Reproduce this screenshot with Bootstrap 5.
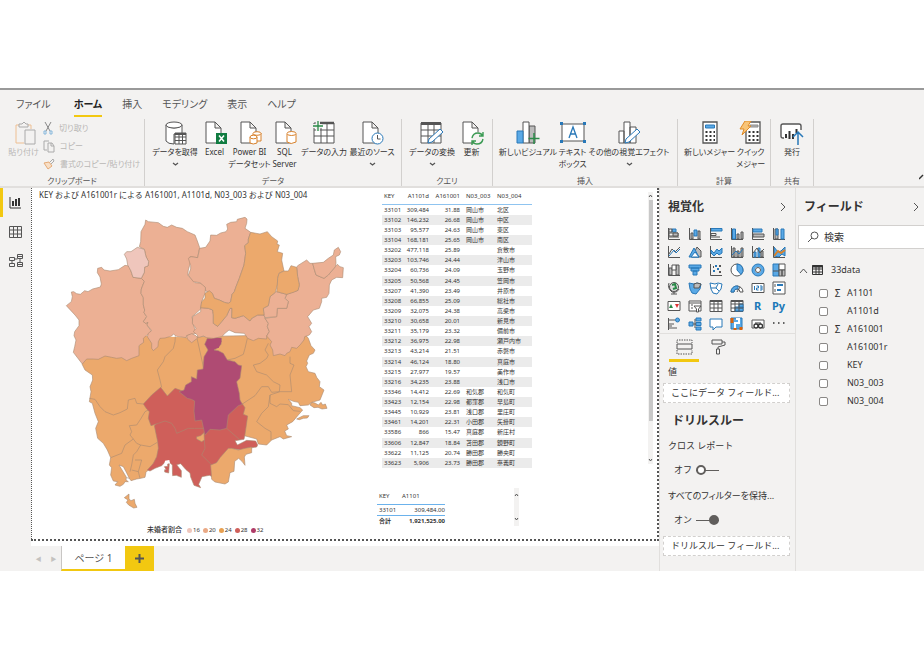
<!DOCTYPE html>
<html lang="ja">
<head>
<meta charset="utf-8">
<meta name="viewport" content="width=device-width, initial-scale=1">
<title>未婚者割合レポート</title>
<link rel="stylesheet" href="https://cdn.jsdelivr.net/npm/bootstrap@5.3.0/dist/css/bootstrap.min.css">
<style>
body{font-family:"Noto Sans","Noto Sans CJK JP",sans-serif;color:#333;font-size:9px;line-height:12px;background:#fff}
button,input{font:inherit;color:inherit}
svg{display:block;flex:none;fill:none;stroke:#555;stroke-width:1}
.app{margin-top:88px;border-top:2px solid #999}
.chrome{background:#f3f2f1}
.tabs{padding:5px 16px 0;font-size:10px;line-height:18px;font-feature-settings:"palt";height:29px}
.tabs a{color:#555;text-decoration:none;height:22px;border-bottom:2px solid transparent;white-space:nowrap}
.tabs a.on{color:#222;font-weight:700;border-color:#f2c811}
.tabs .t1{margin-right:23px}.tabs .t2{margin-right:20px}
.ribbon{font-size:8px;line-height:12px;font-feature-settings:"palt";border-bottom:2px solid #e1dfdd;height:69px}
.grp{border-right:1px solid #d2d0ce;height:67px;display:flex;flex-direction:column;justify-content:space-between;flex:none}
.tools{padding-left:6px}
.grp-cap{font-size:8px;line-height:11px;text-align:center;color:#555}
.tool{border:0;background:none;padding:2px 0 0;display:flex;flex-direction:column;align-items:center;white-space:nowrap;flex:none}
.tool.off,.mini{color:#b9b7b5}
.mini{border:0;background:none;padding:0;height:18px;display:flex;align-items:center;gap:5px;white-space:nowrap}
.g1{width:145px}.g2{width:257px}.g3{width:91px}.g4{width:185px}.g5{width:93px}.g6{width:43px}
.w30{width:31px}.w40{width:39px}.w50{width:48px}.w60{width:58px}.w80{width:82px}
.rail{width:31px;flex:none}
.rail button{border:0;background:none;height:29px;width:31px;padding:0 0 0 6px;border-left:3px solid transparent}
.rail button.on{border-color:#f2c811}
.canvas{border:dotted #555;border-width:0 2px 2px 1px;min-height:353px}
.sheet{padding-bottom:5px}
.viz-title{font-size:8px;line-height:12px;padding:1px 0 0 7px;white-space:nowrap}
.mapcol{width:342px;flex:none}
.mapcol .map{width:100%;height:auto;stroke:#a98a70;stroke-width:1.8;stroke-linejoin:round}
.legend-row{font-size:6px;line-height:10px;padding-left:115px;gap:3px;font-feature-settings:"palt";margin-top:4px}
.legend-row b{font-size:7px;font-weight:500;margin-right:2px}
.legend-row i{width:5px;height:5px;border-radius:50%;margin-right:1px}
.c16{background:#efc6bc}.c20{background:#eaa985}.c24{background:#e8a050}.c28{background:#cf5f5a}.c32{background:#af3b68}
.grid-data{font-size:6px;line-height:8px;white-space:nowrap;width:150px;table-layout:fixed}
.grid-data th{font-weight:400;padding:0 0 0 2px}
.grid-data td{padding:0 0 0 2px}
.grid-data .n{text-align:right}
.big{height:280px;margin-left:8px}
.big thead th{border-bottom:1px solid #8fc4f0;height:16px}
.big .n{padding-right:2px}
.big .s{padding-left:4px}
.big tbody tr:nth-child(even){background:#ebebeb}
.tot{width:68px;margin-left:3px}
.tot th,.tot td{border-bottom:1px solid #6bb2ec;height:11px}
.tot thead th{height:16px}
.tot tfoot td{border:0;font-weight:700}
.sb{width:5px;background:#f3f2f1;display:flex;flex-direction:column;justify-content:space-between;align-items:center}
.sb span{background:#c8c8c8;width:4px;flex:none;margin-bottom:35px}
.sb-low{margin-left:69px}
.pages{height:25px}
.pages a{width:64px;background:#fff;border-bottom:2px solid #f2c811;border-left:1px solid #c8c6c4;color:#555;text-decoration:none;font-size:10px}
.pages .plus{width:29px;background:#f2c811;border:0;padding:0}
.pages .nav-b{border:0;background:none;width:15px;padding:0;color:#c4c2c0;font-size:6px}
.pane-v{width:137px;flex:none;border-right:1px solid #e1dfdd;border-left:1px solid #e1dfdd}
.pane-f{width:128px;flex:none}
.head{padding:10px 4px 0 8px}
.ttl{font-size:12px;line-height:18px;font-weight:700;color:#333;margin:0}
.gal{display:grid;grid-template-columns:repeat(6,21px);grid-auto-rows:18px;padding-left:3px;margin-top:9px}
.gal button{border:0;background:none;padding:0;display:flex;align-items:center;justify-content:center;color:#1b78b8;font-size:11px;font-weight:700}
.k{stroke:#2878b8}.f{fill:#5aa9e6;stroke:#2878b8}.g{fill:#bbb}
.fmt{border-top:1px solid #e1dfdd;padding:5px 0 0 9px;gap:4px}
.fmt button{border:0;background:none;width:30px;height:23px;padding:0;border-bottom:3px solid transparent;display:flex;justify-content:center}
.fmt button.on{border-color:#f2c811}
.lab{padding:4px 0 5px 8px;white-space:nowrap}
.sub{padding:10px 0 0 8px;white-space:nowrap}
.tight{font-feature-settings:"palt";padding-top:14px}
.ttl.drill{padding:9px 0 0 12px}
.switch-row{padding:12px 0 0 14px;gap:4px}
.well{border:1px dashed #d2d0ce;background:#fff;height:20px;line-height:18px;margin:0 5px 0 3px;padding-left:7px;white-space:nowrap}
.well.last{margin-top:10px}
.sw{appearance:none;width:23px;height:10px;margin:0;background:linear-gradient(#605e5c,#605e5c) center/100% 1px no-repeat;position:relative}
.sw::before{content:"";position:absolute;left:0;top:0;width:10px;height:10px;border:2px solid #605e5c;border-radius:50%;background:#fff}
.sw:checked::before{left:13px;background:#605e5c}
.search{height:24px;background:#fff;border:1px solid #d2d0ce;border-right:0;margin:9px 0 12px 2px;padding-left:8px;gap:5px}
.search input{border:0;background:none;width:90px;font-size:10px;padding:0;outline:0}
.search input::placeholder{color:#333;opacity:1}
.tbl-name{padding:3px 0 8px 3px;gap:4px}
.field{height:18px;padding-left:23px}
.field input{appearance:none;width:9px;height:9px;border:1px solid #8a8886;border-radius:2px;background:#fff;margin:0}
.field span{width:19px;text-align:center;font-size:10px}
</style>
<script src="https://cdn.jsdelivr.net/npm/bootstrap@5.3.0/dist/js/bootstrap.bundle.min.js"></script>
</head>
<body>
<div class="app chrome">
<nav class="tabs d-flex">
<a href="#" class="t1">ファイル</a><a href="#" class="t2 on">ホーム</a><a href="#" class="t2">挿入</a><a href="#" class="t2">モデリング</a><a href="#" class="t2">表示</a><a href="#">ヘルプ</a>
</nav>
<div class="ribbon d-flex">
<section class="grp g1"><div class="d-flex">
<button class="tool off ms-2 w30"><svg width="24" height="25" viewBox="0 0 24 25"><path stroke="#eebf92" d="M9 4H4v18h8M14 4h5v4"/><path stroke="#aaa" fill="#f3f2f1" d="M7 6V3h3l2-2 2 2h2v3zM13 9h10v14H13z"/></svg>貼り付け</button>
<div class="ms-1"><button class="mini"><svg width="11" height="13" viewBox="0 0 11 13" stroke="#888"><path stroke="#888" d="M2 0l5 9M8 0L3 9"/><path stroke="#85b7dc" d="M1 9h2v3H1zM7 9h2v3H7z"/></svg>切り取り</button>
<button class="mini"><svg width="12" height="13" viewBox="0 0 12 13"><path stroke="#aaa" d="M4 10H1V1h5M5 3h4l2 3v6H5zM8 3v3h3"/></svg>コピー</button>
<button class="mini"><svg width="12" height="12" viewBox="0 0 12 12"><path stroke="#aaa" d="M7 4l3-3 1 2-3 3"/><path stroke="#e5aa76" fill="#f8dfc6" d="M1 5l5-1 3 4-4 3z"/></svg>書式のコピー/貼り付け</button></div></div>
<div class="grp-cap">クリップボード</div></section>

<section class="grp g2"><div class="d-flex tools">
<button class="tool w50"><svg width="24" height="25" viewBox="0 0 24 25"><path fill="#fff" d="M3 4v16q2 3 8 3V13h8V4q-2 3-8 3T3 4"/><ellipse cx="11" cy="4" rx="8" ry="3" fill="#fff"/><path fill="#fff" d="M12 12h11v11H12zM12 16h11M12 19.500h11M16 13v10M19.500 13v10"/><path stroke-width="2" d="M12 13h11"/></svg>データを取得<svg width="7" height="12" viewBox="0 0 7 12"><path stroke-width="1.300" d="M1 5l2.500 2L6 5"/></svg></button>
<button class="tool w30"><svg width="24" height="25" viewBox="0 0 24 25"><path fill="#fff" d="M3 1h9l6 6v15H3zM12 1v6h6"/><path stroke="none" fill="#107c41" d="M13 12h11v11H13z"/><path stroke="#fff" stroke-width="1.500" d="M16 14.500l5 6M21 14.500l-5 6"/></svg>Excel</button>
<button class="tool w40"><svg width="24" height="25" viewBox="0 0 24 25"><path fill="#fff" d="M3 1h9l6 6v15H3zM12 1v6h6"/><g stroke="#d8812b" fill="#fff"><path d="M15 13v5q3 3 8 2v-8"/><ellipse cx="19" cy="12.500" rx="4" ry="1.800"/><path d="M12 16v6q3 2 7 0v-6"/><ellipse cx="15.500" cy="16" rx="3.500" ry="1.800"/></g></svg>Power BI<span>データセット</span></button>
<button class="tool w30"><svg width="24" height="25" viewBox="0 0 24 25"><path fill="#fff" d="M3 1h9l6 6v15H3zM12 1v6h6"/><path fill="#fff" stroke="#d8812b" d="M14 13v8q4 3 9 0v-8"/><ellipse cx="18.500" cy="12.500" rx="4.500" ry="2" fill="#fff" stroke="#d8812b"/></svg>SQL<span>Server</span></button>
<button class="tool w50"><svg width="24" height="25" viewBox="0 0 24 25"><path fill="#fff" d="M2 2h20v20H2zM2 9h20M2 15h20M9 2v20M15 2v20"/><path stroke-width="2.500" d="M8 2h14"/><path stroke="#f3f2f1" stroke-width="4" d="M6 0v10M0 5h10"/><path stroke="#2a8a48" stroke-width="1.300" d="M6 0v10M1 5h10"/></svg>データの入力</button>
<button class="tool w50"><svg width="24" height="25" viewBox="0 0 24 25"><path fill="#fff" d="M3 1h9l6 6v15H3zM12 1v6h6"/><circle cx="17.500" cy="17.500" r="5.500" fill="#fff" class="k"/><path d="M17.500 14v4h3"/></svg>最近のソース<svg width="7" height="12" viewBox="0 0 7 12"><path stroke-width="1.300" d="M1 5l2.500 2L6 5"/></svg></button>
</div><div class="grp-cap">データ</div></section>

<section class="grp g3"><div class="d-flex tools">
<button class="tool w50"><svg width="24" height="25" viewBox="0 0 24 25"><path fill="#fff" d="M1 2h20v20H1zM1 9h20M1 15h20M8 2v20M14 2v20"/><path stroke-width="3" d="M1 2.500h20"/><path fill="#fff" class="k" d="M8 22l1-4L20 8l3 3-11 10z"/></svg>データの変換<svg width="7" height="12" viewBox="0 0 7 12"><path stroke-width="1.300" d="M1 5l2.500 2L6 5"/></svg></button>
<button class="tool w30"><svg width="24" height="25" viewBox="0 0 24 25"><path fill="#fff" d="M3 1h9l6 6v15H3zM12 1v6h6"/><circle cx="17.500" cy="17.500" r="6.500" fill="#f3f2f1" stroke="none"/><path stroke="#3a9a53" stroke-width="1.400" d="M12 17q1-5 6-5 3 0 5 3M23 11v4h-4M23 18q-1 5-6 5-3 0-5-3M12 24v-4h4"/></svg>更新</button>
</div><div class="grp-cap">クエリ</div></section>

<section class="grp g4"><div class="d-flex tools">
<button class="tool w60"><svg width="24" height="25" viewBox="0 0 24 25"><path fill="#bbb" d="M13 5h6v17h-6z"/><path fill="#fff" d="M7 1h6v21H7z"/><path class="f" d="M1 10h6v12H1z"/><path stroke="#2a8a48" stroke-width="1.500" d="M18 12v11M12.500 17.500h11"/></svg>新しいビジュアル</button>
<button class="tool w30"><svg width="26" height="25" viewBox="0 0 26 25"><path fill="#fff" d="M2 3h22v17H2z"/><path stroke="none" fill="#2878b8" d="M0 1h3v3H0zM23 1h3v3h-3zM0 19h3v3H0zM23 19h3v3h-3z"/><path class="k" stroke-width="1.300" d="M9 17l4-11 4 11M10 13h6"/></svg>テキスト<span>ボックス</span></button>
<button class="tool w80"><svg width="24" height="25" viewBox="0 0 24 25"><path fill="#fff" d="M2 10h5v12H2zM7 1h6v21H7zM13 6h6v16h-6z"/><path fill="#fff" class="k" d="M8 22l1-4L20 8l3 3-11 10z"/></svg>その他の視覚エフェクト<svg width="7" height="12" viewBox="0 0 7 12"><path stroke-width="1.300" d="M1 5l2.500 2L6 5"/></svg></button>
</div><div class="grp-cap">挿入</div></section>

<section class="grp g5"><div class="d-flex tools">
<button class="tool"><svg width="24" height="25" viewBox="0 0 24 25"><path fill="#fff" stroke-width="1.300" d="M5 1h14v21H5z"/><path class="f" d="M7.500 4h9v3h-9z"/><path stroke="#333" stroke-width="2" stroke-dasharray="2 2" d="M7.500 11h9.500M7.500 15h9.500M7.500 19h9.500"/></svg>新しいメジャー</button>
<button class="tool w30"><svg width="24" height="25" viewBox="0 0 24 25"><path fill="#fff" stroke-width="1.300" d="M7 1h14v21H7z"/><path class="g" stroke="#888" d="M11 4h8v2h-8z"/><path stroke="#333" stroke-width="2" stroke-dasharray="2 2" d="M9.500 11h10M9.500 15h10M9.500 19h10"/><path fill="#f8c477" stroke="#e08b27" d="M6 0h6L9 5h3L3 14l2-6H1z"/></svg>クイック<span>メジャー</span></button>
</div><div class="grp-cap">計算</div></section>
<section class="grp g6"><div class="d-flex justify-content-center">
<button class="tool"><svg width="24" height="25" viewBox="0 0 24 25"><path fill="#fff" stroke-width="1.400" d="M4 17H3q-2 0-2-2V5q0-2 2-2h16q2 0 2 2v4"/><path stroke="#333" stroke-width="2" d="M6 17v-4M9.500 18v-8M13 18v-5M16.500 12V8"/><path class="k" stroke-width="1.500" d="M18 24V12M13 16l5-5 5 5"/></svg>発行</button>
</div><div class="grp-cap">共有</div></section>
<button class="mini ms-auto mt-auto" aria-label="リボンを折りたたむ"><svg width="5" height="6" viewBox="0 0 5 6"><path stroke="#333" stroke-width="1.500" d="M0 5l4-4"/></svg></button>
</div>

<div class="d-flex">
<aside class="rail d-flex flex-column">
<button class="on" aria-label="レポート"><svg width="12" height="12" viewBox="0 0 12 12"><path stroke="#333" d="M1 0v11h11"/><path stroke="#333" stroke-width="2" d="M4 9V4M7 9V2M10 9V1"/></svg></button>
<button aria-label="データ"><svg width="13" height="12" viewBox="0 0 13 12"><path d="M.5.5h12v11H.5zM.5 4h12M.5 8h12M4.500 1v10M8.500 1v10"/></svg></button>
<button aria-label="モデル"><svg width="14" height="14" viewBox="0 0 14 14"><path d="M.5 3.500h5v3h-5zM.5 9.500h5v3h-5zM8.500.5h5v4h-5zM8.500 8.500h5v4h-5zM8.500 2.500h5M8.500 10.500h5M3 6.500v3M5.500 5h3M11 4.500v4"/></svg></button>
</aside>
<main class="flex-grow-1">
<div class="bg-white sheet"><div class="canvas d-flex">
<section class="mapcol">
<div class="viz-title">KEY および A161001r による A161001, A1101d, N03_003 および N03_004</div>
<svg class="map" viewBox="6 -2 1026 960" role="img" aria-label="未婚者割合の地図">
<g fill="#eca96c">
<path stroke="none" transform="translate(120 390)" d="M36 97L45 115 67 130 68 145 60 165 63 180 58 210 67 215 75 245 85 270 77 290 83 320 100 335 112 355 122 378 118 400 125 408 122 430 130 448 143 450 135 460 150 464 160 458 165 450 175 450 168 445 170 432 178 440 183 447 200 442 212 440 225 437 228 422 240 410 300 340 420 300 420 20 300 15 220 12 200 60 40 80z"/>
<path transform="translate(480 390)" d="M20 15L345 8 355 20 363 42 375 55 370 65 358 70 350 88 353 95 348 105 355 120 375 125 380 137 390 150 388 165 402 175 390 205 365 212 355 220 330 222 325 212 310 209 295 203 305 215 305 222 330 228 338 235 325 250 308 270 290 280 295 292 284 298 290 312 305 315 280 322 270 315 245 325 230 340 205 337 200 322 155 310 150 230 50 150z"/>
</g>
<g transform="translate(120 390)"><path d="M36 97L45 115 67 130 68 145 60 165 63 180 58 210 67 215 75 245 85 270 77 290 83 320 100 335 112 355 122 378 118 400 125 408 122 430 130 448 143 450 135 460 150 464 160 458 165 450 175 450 168 445 170 432 178 440 183 447 200 442 212 440 225 437 228 422 240 410"/>
<path d="M316 12l-1 18-5 20-25 25-5 15-18 25 8 30 5 22M58 200l17 3 15 22 15 15 25 10 20-7 22-11 3-27 20-5 5 15 20 2M122 378l33-13 10-25 25-18 10 13 12 5 28 5 22-13M190 322l-10-12 5-10-7-18 22-2 12-18 13-22 15-8M212 340l-12 20-10 10-5 30-5 20M195 385h20l-10 35-20-5M205 420l5 20"/>
<path fill="#fff" d="M147 400l13 5 8 15 10 20-8-2-12-20z"/>
<path fill="#eca96c" d="M163 498l14-11v15l6 5 10-4 2 12 6 12-10 2-15-9-7-8 5-7z"/></g>
<g transform="translate(480 390)">
<path d="M172 20l-7 30-5 18-25 12-23 5M235 35l-10 20 10 15-5 10-20 15-20 5 10 20 30 10 20 20 20 10-2 20-23 2-10-17h-20l-20 27-38 25M300 75v20l12 5-12 30 5 50-35 0-30 10v25l20 10 10-8 25 2 15 18 20 2M240 190l-5 35-20 20-15 25 25 20 18 10v25"/>
<path fill="#eca96c" d="M360 220l5-8 10 2 10 6 8-8 5 8 8-3 5 13-15 2-12-5-12 1zM320 262l20-10 17 0-5 7-12 1-12 4z"/>
<path fill="#cf5f5a" d="M-107 282l10 48 2 20-5 25-10 20-18 20 8 3 15-8 20-8 10-10 12-1 10 9v32l12-1 15 6v-20l-14-18 12-3 16 18 12 10 2 12 10 25 20 7-6-10 10-23 22-4 22 10 7 5-12-14-3-30 18-20 10-2 25-28h10l20 4 20-6 25-4 3-6-6-12-27-2-20 10-8 4-7-13 27-4 3-15 8-55-13-5 5-20-8-12-40-14-120 20-40 0z"/>
<path fill="#fff" stroke="none" d="M-75 387l13-2 2 10-18 17h20v-10l5 30h-14v-14h-14z"/>
<path fill="#cf5f5a" d="M-77 405l10-1 0-7 5-1-2 28-12-3v-7h5z"/>
<path fill="#eca96c" d="M62 400l18-7 10-15 25-28h10l20 5 20-5 20-4v17l-17 5-5 8 2 25-9-12-10-9-12 9-2 30-12 4-5 28-10 6-30-6-10-8z"/>
<path fill="#cf5f5a" d="M-140 217l25-27 27-23 20 26 23-23 15 5 50 25 25 55-2 35-30 0-18 0-35 15-5-15-10-15-20-7-20 7-22 7-8-22 3-20-8-8z"/>
<path fill="#af4b73" d="M52 20l13 2 15-4 15 2-2 18-11 12-10 5 13 2 15 8 12 20 23 5 10 10 10 2-5 38-10 10 8 35 2 20 7 13-12 4-30 28-5 40-20 5-30-2-15 17-10-45-20 3-3-30 2-30-10-5-12-3-25-20 15-5 5-15 17-10v-15l16 7 2-27 17-3 3-37 12-20-10-17z"/>
<path fill="#eca96c" d="M20 315l12-3 10-9 1 22-8 5-15-8z"/>
<path d="M43 325l2 25-10 20 15 15 15 15M110 290l40 35"/></g>
<g fill="#ecb094">
<path d="M109 312l15-12 3-15-3-14 7-1 9 6 11 2 13-11 10 3 14-8 23-6 3-9-4-21-8-13 1-13 12-3 7 8 18 3 25-4 20-13 12 2 8 22 4 12 25 3 9 9-9 23-1 13 7 13v22l4 15-2 8 8 12-10 15 7 5 7-3-3 8 12 17v6l-13 8-10 9 1 12-14 10v30l-22 8-15 7-15-9-15 2-15-3-20-4-20 10-15-1h-20l-13 15-7-9-20-26 4-17 4-20-6-13 2-12 13-18v-17l-12-15z"/>
<path d="M347 55l8 5 30 3 15 11 12 3 13-7 15 7 17 3 15 10 23 10 7 18 7 20-4 19-2 11-23-3 2 15-7 25-2 15 22 23 18 2 14 11-2 19-10 25-3 22-14 13-12 10 4 25 10 25-15 3-15 4-2 6-28-4-10-7-5 6-20 6-15 1-5 10-1 15-14 12-5-7v-15l-13-20 3-10 10-8-14-17 3-8-7 3-7-5 10-15-8-12 2-8-4-15v-22l-7-13 1-13 9-23-9-9 9-18 1-16 10-3 2-13-8-15-5-22-15-8 4-15 1-30 12-22z"/>
<path fill="#efc6bc" d="M283 158l7-8h13l19-13 21 6 5 22 8 15-2 13-10 3-1 16-9 18-25-3-6-19-10-18-3-18z"/>
</g>
<g transform="translate(450 0)" fill="#ecb094">
<path d="M59 140L77 137 90 118 92 100 110 101 122 94 138 90 143 82 140 68 152 62 170 60 172 53 195 47 201 52 200 65 195 80 212 92 205 112 205 123 194 132 197 155 192 190 178 230 168 255 163 270 156 278 152 300 145 305 133 302 118 295 103 290 97 275 77 268 76 257 60 243 40 240 25 220 32 202 32 192 25 170 33 165 53 168z"/>
<path d="M62 318L85 320 98 325 100 340 100 365 113 374 125 360 140 342 150 320 156 320 155 348 165 350 190 342 210 358 215 350 233 340 252 340 255 350 265 365 262 375 268 390 260 403 260 412 235 410 220 417 203 410 193 395 165 393 147 385 135 395 125 405 100 410 80 408 70 403 55 408 52 400 40 390 48 380 37 365 38 345 62 330z"/>
<path d="M20 402l15-6 13 6 5 7-18 14-13-11z"/>
<path d="M353 192L380 175 390 185 398 185 402 200 408 220 432 230 445 220 466 195 472 188 480 195 490 198 488 228 470 227 455 235 448 250 447 275 440 287 425 290 425 300 418 320 400 325 383 345 395 365 387 375 395 390 388 400 374 405 372 415 360 430 350 440 335 437 330 450 320 455 315 462 300 457 280 462 278 445 270 430 275 420 260 403 268 390 262 375 265 365 255 350 290 345 292 320 320 320 325 300 315 290 320 278 354 266 358 250 353 225 350 197z"/>
<path d="M398 185L430 182 445 170 460 160 463 145 475 137 482 150 478 160 467 165 468 185 466 195 445 220 432 230 408 220 402 200zM290 270L320 278 315 290 325 300 320 320 292 320 290 345 255 348 252 340 250 320 265 312 270 285 286 272z"/>
<g fill="#eca96c"><path d="M212 92L240 97 262 90 275 105 293 118 291 128 298 130 292 150 308 155 305 175 312 208 297 215 293 230 292 250 286 272 270 285 265 312 250 320 252 340 233 340 215 350 210 358 190 342 165 350 155 348 156 320 150 320 140 342 125 360 113 374 100 365 100 340 98 325 85 320 62 318 65 300 75 290 75 275 88 267 97 275 103 290 118 295 133 302 145 305 152 300 156 278 163 270 168 255 178 230 192 190 197 155 194 132 205 123 205 112z"/>
<path d="M312 208l13 0 8-16 17 5 3 28 5 25-4 16-14 6-20 6-30-8 2-20 1-20 4-15z"/></g>
<path fill="#af4b73" stroke="none" d="M84 412l38-3 2 10-8 20-28-2-6-10z"/>
</g>
</svg>
<div class="legend-row d-flex align-items-center"><b>未婚者割合</b><span class="d-flex align-items-center"><i class="c16"></i>16</span><span class="d-flex align-items-center"><i class="c20"></i>20</span><span class="d-flex align-items-center"><i class="c24"></i>24</span><span class="d-flex align-items-center"><i class="c28"></i>28</span><span class="d-flex align-items-center"><i class="c32"></i>32</span></div>
</section>
<section class="flex-grow-1 d-flex flex-column">
<div class="d-flex justify-content-between">
<table class="grid-data big"><colgroup><col style="width:20px"><col style="width:29px"><col style="width:31px"><col style="width:31px"><col></colgroup>
<thead><tr><th>KEY</th><th class="n">A1101d</th><th class="n">A161001</th><th class="s">N03_003</th><th class="s">N03_004</th></tr></thead><tbody id="rows"></tbody></table>
<div class="sb my-1 me-1"><svg width="5" height="8" viewBox="0 0 5 8"><path d="M1 5l1.500-2L4 5"/></svg><span class="flex-grow-1"></span><svg width="5" height="8" viewBox="0 0 5 8"><path d="M1 3l1.500 2L4 3"/></svg></div>
</div>
<div class="d-flex mt-3 pt-1">
<table class="grid-data tot"><colgroup><col style="width:23px"><col></colgroup><thead><tr><th>KEY</th><th>A1101</th></tr></thead><tbody><tr><td>33101</td><td class="n">309,484.00</td></tr></tbody><tfoot><tr><td>合計</td><td class="n">1,921,525.00</td></tr></tfoot></table>
<div class="sb sb-low"><svg width="5" height="12" viewBox="0 0 5 12"><path d="M1 8l1.500-2L4 8"/></svg><svg width="5" height="12" viewBox="0 0 5 12"><path d="M1 4l1.500 2L4 4"/></svg></div>
</div>
</section>
</div></div>
<div class="pages d-flex"><button class="nav-b" aria-label="前のページ">◀</button><button class="nav-b" aria-label="次のページ">▶</button><a href="#" class="d-flex align-items-center justify-content-center">ページ 1</a><button class="plus d-flex align-items-center justify-content-center" aria-label="ページを追加"><svg width="9" height="9" viewBox="0 0 9 9"><path stroke-width="2" d="M4.500 0v9M0 4.500h9"/></svg></button></div>
</main>

<aside class="pane-v">
<div class="head d-flex justify-content-between align-items-center"><h2 class="ttl">視覚化</h2><button class="mini me-1" aria-label="折りたたむ"><svg width="7" height="10" viewBox="0 0 7 10"><path d="M1 1l4 4-4 4"/></svg></button></div>
<div class="gal" id="gal"></div>
<div class="fmt d-flex"><button class="on" aria-label="フィールド"><svg width="17" height="16" viewBox="0 0 17 16"><path d="M1 5h15v5H1z"/><path stroke-dasharray="1.500 1" d="M1 4V1h15v3M1 11v4h15v-4"/></svg></button><button aria-label="書式"><svg width="15" height="16" viewBox="0 0 15 16"><path d="M1 1h10v4H1zM11 3h3v3L7 8v2M5.500 10h3v5h-3z"/></svg></button></div>
<div class="lab">値</div>
<div class="well">ここにデータ フィールド...</div>
<h2 class="ttl drill">ドリルスルー</h2>
<div class="sub">クロス レポート</div>
<label class="switch-row d-flex align-items-center">オフ<input type="checkbox" role="switch" class="sw"></label>
<div class="sub tight">すべてのフィルターを保持...</div>
<label class="switch-row d-flex align-items-center">オン<input type="checkbox" role="switch" class="sw" checked></label>
<div class="well last">ドリルスルー フィールド...</div>
</aside>
<aside class="pane-f">
<div class="head d-flex justify-content-between align-items-center"><h2 class="ttl">フィールド</h2><button class="mini" aria-label="折りたたむ"><svg width="7" height="10" viewBox="0 0 7 10"><path d="M1 1l4 4-4 4"/></svg></button></div>
<div class="search d-flex align-items-center"><svg width="12" height="12" viewBox="0 0 12 12"><circle cx="7.500" cy="4.500" r="3.500"/><path d="M5 7l-4 4"/></svg><input aria-label="検索" placeholder="検索"></div>
<div class="tbl-name d-flex align-items-center"><svg width="9" height="7" viewBox="0 0 9 7"><path d="M1 6l3.500-4L8 6"/></svg><svg width="11" height="10" viewBox="0 0 11 10"><path d="M.5.5h10v9H.5zM1 4h9M1 7h9M4 1v8M7 1v8" stroke="#333"/><path stroke="#333" stroke-width="2" d="M0 1.500h11"/></svg><span class="ms-1">33data</span></div>
<div id="fields"></div>
</aside>
</div>
</div>
<script>
const data=`33101 309,484 31.88 岡山市 北区
33102 146,232 26.68 岡山市 中区
33103 95,577 24.63 岡山市 東区
33104 168,181 25.65 岡山市 南区
33202 477,118 25.89 - 倉敷市
33203 103,746 24.44 - 津山市
33204 60,736 24.09 - 玉野市
33205 50,568 24.45 - 笠岡市
33207 41,390 23.49 - 井原市
33208 66,855 25.09 - 総社市
33209 32,075 24.38 - 高梁市
33210 30,658 20.01 - 新見市
33211 35,179 23.32 - 備前市
33212 36,975 22.98 - 瀬戸内市
33213 43,214 21.51 - 赤磐市
33214 46,124 18.80 - 真庭市
33215 27,977 19.57 - 美作市
33216 34,235 23.88 - 浅口市
33346 14,412 22.69 和気郡 和気町
33423 12,154 22.98 都窪郡 早島町
33445 10,929 23.81 浅口郡 里庄町
33461 14,201 22.31 小田郡 矢掛町
33586 866 15.47 真庭郡 新庄村
33606 12,847 18.84 苫田郡 鏡野町
33622 11,125 20.74 勝田郡 勝央町
33623 5,906 23.73 勝田郡 奈義町`;
const cls=['','n','n','s','s'];
document.getElementById('rows').innerHTML=data.split('\n').map(r=>'<tr>'+r.split(' ').map((c,i)=>`<td class="${cls[i]}">${c==='-'?'':c}</td>`).join('')+'</tr>').join('');
const ax='<path d="M1.500 1v11.500H13"/>';
const icons=[
['積み上げ横棒',ax+'<path class="f" d="M5 2h4v3H5z"/><path d="M2 2h3v3H2zM2 6h9v3H2zM2 10h10"/><path class="g" d="M6 6h5v3H6z"/>'],
['積み上げ縦棒',ax+'<path class="g" d="M3 6h2v6H3zM10 4h2v8h-2z"/><path class="f" d="M6 3h3v6H6z"/>'],
['集合横棒','<path class="f" d="M2 1.500h11v2.500H2z"/>'+ax+'<path d="M2 6.500h5v2H2zM2 10h9"/>'],
['集合縦棒',ax+'<path class="f" d="M2.500 2h3v10h-3z"/><path class="g" d="M7 7h2v5H7zM11 5h2v7h-2z"/>'],
['100% 横棒',ax+'<path class="f" d="M2 2h9v3H2z"/><path class="g" d="M2 7h11v3H2z"/>'],
['100% 縦棒',ax+'<path class="g" d="M3 2h3v10H3z"/><path class="f" d="M4 2h2v6H4zM9 2h3v10H9z"/>'],
['折れ線',ax+'<path d="M2 9l3-5 3 3 5-5"/><path class="k" d="M2 11l5-6 2 3 4-4"/>'],
['面','<path class="g" d="M4 12L9 2l4 4v6z"/><path class="f" d="M1 12l5-9 5 9z"/><path fill="#fff" class="k" d="M3 12l4-5 4 5z"/>'],
['積み上げ面',ax+'<path class="f" d="M2 5l3 3 3-4 2 2 3-3v5l-3 2-2-2-3 3-3-3z"/>'],
['折れ線と積み上げ',ax+'<path class="g" d="M3 3h2v9H3zM7 6h2v6H7zM11 3h2v9h-2z"/><path class="k" d="M2 10l4-4 3 3 4-5"/>'],
['折れ線と集合',ax+'<path class="f" d="M3 7h2v5H3zM7 3h2v9H7z"/><path class="g" d="M10 6h2v6h-2z"/><path d="M2 8l4-5 3 5 4-4"/>'],
['リボン','<path class="f" d="M2 2l4 5 3-1 4-4v9l-3-2-3 3-5-1z"/><path stroke="#d9822b" stroke-width="2" d="M2 11l4-5 3 2 4-3"/>'+ax],
['ウォーターフォール',ax+'<path class="g" d="M2 5h3v7H2zM9 2h3v10H9z"/><path fill="#fff" d="M5 2h4v5H5z"/>'],
['じょうご','<path class="f" d="M1 2h12v3H1zM3 5h8v3H3zM5 8h4v4H5z"/>'],
['散布図',ax+'<path stroke-width="2" class="k" d="M4 8h2M8 6h2M6 3h2"/><path stroke-width="2" d="M4 4h1M10 3h2M10 9h2"/>'],
['円','<circle cx="7" cy="7" r="6" fill="#fff"/><path class="f" d="M7 1a6 6 0 0 1 4 10.500L7 7z"/>'],
['ドーナツ','<circle cx="7" cy="7" r="4.500" stroke="#5aa9e6" stroke-width="3"/><circle cx="7" cy="7" r="6" class="k"/><circle cx="7" cy="7" r="2.500" fill="#fff"/>'],
['ツリーマップ','<path class="f" d="M1 1h6v12H1z"/><path fill="#fff" d="M7 1h6v6H7z"/><path class="g" d="M7 7h3v6H7zM10 7h3v6h-3zM1 8h6"/>'],
['マップ','<circle cx="7" cy="6" r="4.500" fill="#ddd"/><path stroke="#2a8a48" stroke-width="2" d="M5 4l3-1 1 4-3 1"/><path d="M2 2Q0 7 5 11q5 1 7-3M7 11v2M4 13h6"/>'],
['塗り分け地図','<path class="f" d="M1 2l5 1 3-1 4 1-1 5-4 5-4-1-2-4z"/><path class="g" d="M6 3l3-1 4 1-2 4-5 0z"/>'],
['図形マップ','<path fill="#fff" class="k" d="M1 2l5 1 3-1 4 1-1 5-4 5-4-1-2-4zM2 7h5l2-4M7 7l3 3"/>'],
['ゲージ','<path fill="#fff" d="M1 11a6 6 0 0 1 12 0h-3a3 3 0 0 0-6 0z"/><path class="f" d="M1 11a6 6 0 0 1 7-6v3a3 3 0 0 0-4 3z"/><path d="M7 11l3-5"/>'],
['カード','<path fill="#fff" d="M1 2.500h12v9H1z"/><path class="k" d="M3.500 5v4M5.500 5h2v2h-2v2h2M9 5h2v4H9M9 7h2"/>'],
['複数の行カード','<path fill="#fff" d="M1 1h12v12H1z"/><path d="M3 3v3M3 8v3"/><path class="k" stroke-width="2" d="M5 4h6M5 9h4"/>'],
['KPI','<path fill="#fff" d="M1 2.500h12v9H1z"/><path fill="#2a8a48" stroke="none" d="M2 9l2-4 2 4z"/><path fill="#d33" stroke="none" d="M8 5h4l-2 4z"/>'],
['スライサー','<path fill="#fff" d="M1 2h12v10H1z"/><path d="M1 4h12M3 6h2M3 9h2"/><path fill="#fff" d="M6 7h7l-2.500 3v3h-2v-3z"/>'],
['テーブル','<path fill="#fff" d="M1 1.500h12v11H1zM1 5h12M1 9h12M5 2v10M9 2v10"/><path stroke-width="2" d="M1 2h12"/>'],
['マトリックス','<path fill="#fff" d="M1 1.500h12v11H1z"/><path class="f" d="M5 8h8v4H5zM9 5h4v4H9z"/><path d="M1 5h12M1 9h12M5 2v10M9 2v10"/><path stroke-width="2" d="M1 2h12"/>'],
['R','R'],['Python','Py'],
['主要なインフルエンサー','<path d="M1.500 1v12M1 3h7M1 7h6M1 11h9M1 9h4"/><circle cx="10.500" cy="3" r="2" class="f"/>'],
['分解ツリー','<path class="f" d="M1 5h4v4H1zM8 1h5v3H8zM8 5.500h5v3H8zM8 10h5v3H8z"/><path d="M5 7h3M7 2v9"/>'],
['Q&amp;A','<path fill="#fff" class="k" d="M1 2h12v8H7l-3 3v-3H1z"/>'],
['ArcGIS','<path class="f" d="M1 1h11v11H1z"/><path stroke="#fff" stroke-width="2" d="M6 2h3v4H5v5"/><path stroke="#d9620b" stroke-width="3" d="M2 1v5M11 10v3M5 11v2"/>'],
['Power Apps','<path fill="#fff" d="M3 11H1V3h12v8h-2"/><circle cx="5" cy="9" r="2" stroke="#333" stroke-width="1.300"/><circle cx="9.500" cy="9" r="2" stroke="#333" stroke-width="1.300"/><path stroke="#333" d="M4 6h6"/>'],
['その他','<path stroke="#333" stroke-width="1.500" stroke-dasharray="1.500 3.500" d="M1 6h12"/>']];
document.getElementById('gal').innerHTML=icons.map(([n,s])=>`<button aria-label="${n}">${s[0]==='<'?`<svg width="14" height="14" viewBox="0 0 14 14">${s}</svg>`:s}</button>`).join('');
document.getElementById('fields').innerHTML=['A1101*','A1101d','A161001*','A161001r','KEY','N03_003','N03_004'].map(f=>`<label class="field d-flex align-items-center"><input type="checkbox"><span>${f.endsWith('*')?'Σ':''}</span>${f.replace('*','')}</label>`).join('');
</script>
</body>
</html>
